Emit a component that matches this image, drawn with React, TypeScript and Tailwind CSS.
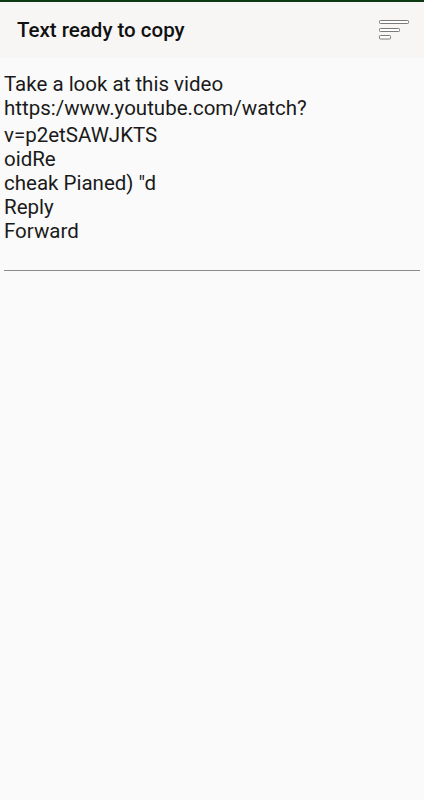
import React from 'react';

const lines = [
  'Take a look at this video',
  'https:/www.youtube.com/watch?',
];
const rest = ['v=p2etSAWJKTS', 'oidRe', 'cheak Pianed) "d', 'Reply', 'Forward'];

const SortIcon = () => (
  <svg width="32" height="22" viewBox="0 0 32 22" fill="none">
    <rect x="1.5" y="0.5" width="29" height="3" rx="0.8" fill="#fff" stroke="#7a7a7a" />
    <rect x="1.5" y="8.5" width="20" height="3" rx="0.8" fill="#fff" stroke="#7a7a7a" />
    <rect x="1.5" y="15.5" width="11" height="3.5" rx="0.8" fill="#fff" stroke="#7a7a7a" />
  </svg>
);

export default function App() {
  return (
    <div
      className="w-[424px] h-[800px] bg-[#fafafa] flex flex-col border-t-2 border-[#0d3a12]"
      style={{ fontFamily: 'Roboto, "Noto Sans", sans-serif' }}
    >
      {/* Header */}
      <div className="h-[56px] bg-[#f8f6f5] flex items-center justify-between pl-[17px] pr-[14px]">
        <h1 className="text-[20.5px] font-medium text-[#111]">Text ready to copy</h1>
        <div className="pt-[1px]">
          <SortIcon />
        </div>
      </div>

      {/* Body */}
      <div className="px-[4px] pt-[14px] text-[20.5px] text-[#1a1a1a] leading-[24px]">
        {lines.map(l => (
          <div key={l}>{l}</div>
        ))}
        <div className="mt-[3px]">
          {rest.map(l => (
            <div key={l}>{l}</div>
          ))}
        </div>
        <div className="mt-[27px] h-px bg-[#8c8c8c]" />
      </div>
    </div>
  );
}
